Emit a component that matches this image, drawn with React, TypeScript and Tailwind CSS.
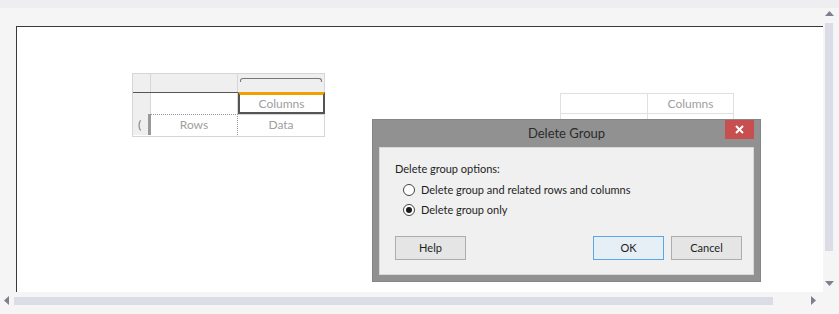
const font = "font-['Lato','Noto_Sans',sans-serif]";

function Radio({ checked, label }: { checked?: boolean; label: string }) {
	return (
		<div className="flex items-center gap-[6px] h-[20px]">
			<span className="w-[12px] h-[12px] rounded-full border border-[#444] bg-white flex items-center justify-center">
				{checked && <span className="w-[6px] h-[6px] rounded-full bg-[#1a1a1a]" />}
			</span>
			<span>{label}</span>
		</div>
	);
}

function Btn({ label, focused, className }: { label: string; focused?: boolean; className?: string }) {
	return (
		<div
			className={`h-[24px] w-[71px] flex items-center justify-center border ${
				focused ? "border-[#5aa7e6] bg-[#e6eef6]" : "border-[#adadad] bg-[#e5e5e5]"
			} ${className ?? ""}`}
		>
			{label}
		</div>
	);
}

export default function App() {
	return (
		<div className={`relative w-[839px] h-[314px] bg-[#f5f5f5] overflow-hidden ${font}`}>
			<div className="h-[8px] bg-[#eeeef0]" />

			{/* design canvas */}
			<div className="absolute left-[16px] top-[26px] w-[807px] h-[266px] bg-white border-t border-l border-[#3a3a3a]">
				{/* left tablix (selected) */}
				<div className="absolute left-[115px] top-[46px] w-[193px] h-[64px] border border-[#d6d6d6] text-[12px] text-[#a0a0a0]">
					<div className="flex h-[18px]">
						<div className="w-[18px] bg-[#efefef] border-r border-[#d6d6d6]" />
						<div className="w-[87px] bg-[#efefef] border-r border-[#d6d6d6]" />
						<div className="flex-1 bg-[#efefef] pt-[4px] px-[2px]">
							<div className="h-[4px] border-t border-l border-r border-[#777] rounded-t-[3px]" />
						</div>
					</div>
					<div className="flex h-[22px] border-t border-[#555]">
						<div className="w-[18px] bg-[#efefef] border-r border-[#d6d6d6]" />
						<div className="w-[87px] border-r border-[#d6d6d6]" />
						<div className="flex-1 -mt-[1px] -mr-[1px] border-2 border-[#555] border-b-dotted border-t-[3px] border-t-[#f0a000] flex items-center justify-center">
							Columns
						</div>
					</div>
					<div className="flex h-[21px]">
						<div className="w-[18px] bg-[#efefef] border-r-[3px] border-[#999] flex items-center pl-[5px] text-[#777]">(</div>
						<div className="w-[87px] border-t border-dotted border-[#999] border-r flex items-center justify-center">Rows</div>
						<div className="flex-1 border-t border-[#d6d6d6] flex items-center justify-center">Data</div>
					</div>
				</div>

				{/* right tablix */}
				<div className="absolute left-[543px] top-[66px] w-[174px] h-[60px] border border-[#e0e0e0] text-[12px] text-[#a0a0a0]">
					<div className="flex h-[20px] border-b border-[#e0e0e0]">
						<div className="w-[87px] border-r border-[#e0e0e0]" />
						<div className="flex-1 flex items-center justify-center">Columns</div>
					</div>
					<div className="flex h-[20px]">
						<div className="w-[87px] border-r border-[#e0e0e0]" />
					</div>
				</div>
			</div>

			{/* vertical scrollbar */}
			<div className="absolute left-[825px] top-[10px] w-[8px] h-[280px] flex flex-col items-center">
				<svg width="9" height="6" viewBox="0 0 9 6" className="mt-[1px]">
					<path d="M0 5 L4.5 0 L9 5 Z" fill="#7f7f8f" />
				</svg>
				<div className="mt-[6px] w-[8px] h-[228px] bg-[#dcdce6]" />
				<div className="flex-1" />
				<svg width="9" height="6" viewBox="0 0 9 6" className="mb-[3px]">
					<path d="M0 0 L9 0 L4.5 5 Z" fill="#7f7f8f" />
				</svg>
			</div>

			{/* horizontal scrollbar */}
			<div className="absolute left-[4px] top-[296px] w-[815px] h-[9px] flex items-center">
				<svg width="6" height="9" viewBox="0 0 6 9">
					<path d="M5 0 L0 4.5 L5 9 Z" fill="#7f7f8f" />
				</svg>
				<div className="ml-[4px] w-[759px] h-[8px] bg-[#dcdce6]" />
				<div className="flex-1" />
				<svg width="6" height="9" viewBox="0 0 6 9" className="mr-[2px]">
					<path d="M0 0 L5 4.5 L0 9 Z" fill="#7f7f8f" />
				</svg>
			</div>

			{/* dialog */}
			<div className="absolute left-[373px] top-[120px] w-[387px] h-[161px] bg-[#919191] shadow-[0_0_0_1px_#858585] flex flex-col">
				<div className="relative h-[27px] flex items-center justify-center text-[13px] text-[#2b2b2b]">
					Delete Group
					<div className="absolute right-[6px] top-0 w-[29px] h-[19px] bg-[#c74f4f] flex items-center justify-center">
						<svg width="9" height="9" viewBox="0 0 9 9">
							<path d="M1 1 L8 8 M8 1 L1 8" stroke="#fff" strokeWidth="2" />
						</svg>
					</div>
				</div>
				<div className="mx-[6px] mb-[6px] flex-1 bg-[#f0f0f0] border border-[#d8d8d8] text-[11px] text-[#1e1e1e] pl-[15px] pr-[11px] pt-[13px] flex flex-col">
					<div className="h-[18px]">Delete group options:</div>
					<div className="pl-[8px] mt-[1px]">
						<Radio label="Delete group and related rows and columns" />
						<Radio checked label="Delete group only" />
					</div>
					<div className="flex mt-[16px]">
						<Btn label="Help" />
						<div className="flex-1" />
						<Btn label="OK" focused />
						<Btn label="Cancel" className="ml-[7px]" />
					</div>
				</div>
			</div>
		</div>
	);
}
